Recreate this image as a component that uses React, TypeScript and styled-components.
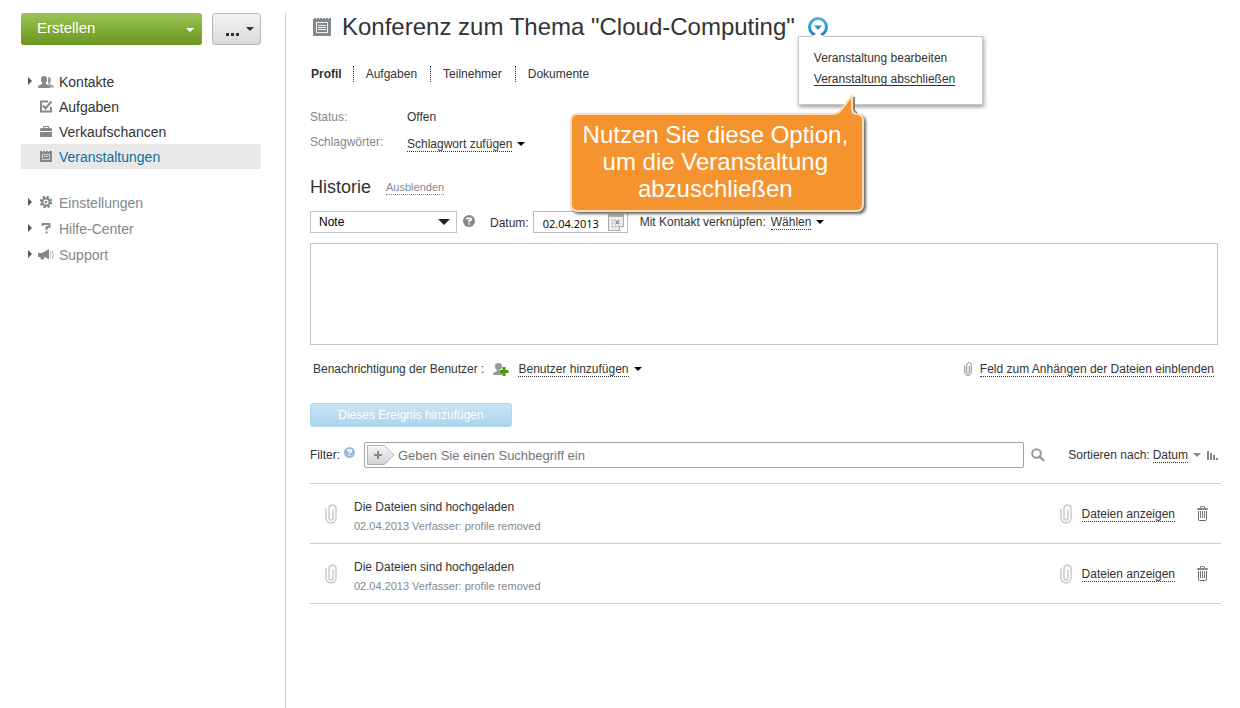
import React from 'react';
import styled, { createGlobalStyle, css } from 'styled-components';

const GlobalStyle = createGlobalStyle`
  *, *::before, *::after { box-sizing: border-box; }
  body {
    margin: 0;
    background: #fff;
    color: #333;
    font-family: "Liberation Sans", Arial, sans-serif;
    font-size: 12px;
    line-height: 16px;
  }
  button, input, select, textarea { font: inherit; color: inherit; }
  button { margin: 0; padding: 0; border: 0; background: none; cursor: pointer; }
  a { color: inherit; text-decoration: none; }
  svg { display: block; flex: none; }
`;

const Page = styled.div`
  display: flex;
  min-height: 100vh;
  padding-top: 13px;
`;

const Sidebar = styled.aside`
  flex: none;
  width: 286px;
  padding: 0 24px 0 21px;
  border-right: 1px solid #ccc;
`;

const Actions = styled.div`
  display: flex;
  gap: 10px;
  height: 32px;
`;

const CreateButton = styled.button`
  flex: 1;
  display: flex;
  align-items: center;
  justify-content: space-between;
  padding: 0 8px 2px 16px;
  border-radius: 3px;
  background: linear-gradient(#9bc453, #6a951f);
  color: #fff;
  font-size: 15px;
  svg { margin-top: 4px; }
`;

const MoreButton = styled.button`
  display: flex;
  align-items: center;
  gap: 7px;
  width: 49px;
  padding: 0 5px 0 13px;
  border: 1px solid #b8b8b8;
  border-radius: 3px;
  background: linear-gradient(#f4f4f4, #d9d9d9);
`;

const NavList = styled.ul`
  margin: 0;
  padding: 0;
  list-style: none;
`;

const MainNav = styled(NavList)`
  margin-top: 24px;
`;

const SideNav = styled(NavList)`
  margin-top: 21px;
`;

const NavItem = styled.li<{ $active?: boolean; $muted?: boolean }>`
  display: flex;
  align-items: center;
  height: ${p => (p.$muted ? 26 : 25)}px;
  font-size: 14px;
  color: ${p => (p.$active ? '#116d9d' : p.$muted ? '#83888d' : '#333')};
  background: ${p => (p.$active ? '#e9e9e9' : 'transparent')};
`;

const NavArrow = styled.span`
  flex: none;
  width: 17px;
  padding: 0 0 2px 7px;
`;

const NavLink = styled.a`
  display: flex;
  align-items: center;
  gap: 5px;
`;

const Main = styled.main`
  flex: 1;
  min-width: 0;
  padding: 0 19px 24px 24px;
`;

const TitleRow = styled.header`
  display: flex;
  align-items: center;
  height: 28px;
  padding-left: 3px;
`;

const Title = styled.h1`
  margin: 0 13px 0 11px;
  font-size: 24px;
  line-height: 28px;
  font-weight: 400;
  white-space: nowrap;
`;

const MenuAnchor = styled.div`
  position: relative;
`;

const MenuToggle = styled.button`
  display: block;
`;

const Menu = styled.div`
  position: absolute;
  z-index: 2;
  top: 19px;
  left: -10px;
  width: 185px;
  height: 69px;
  padding: 11px 15px;
  border: 1px solid #c8c8c8;
  background: #fff;
  box-shadow: 1px 2px 4px rgba(0, 0, 0, 0.4);
  white-space: nowrap;
`;

const MenuLink = styled.a<{ $underlined?: boolean }>`
  display: block;
  line-height: 21px;
  text-decoration: ${p => (p.$underlined ? 'underline' : 'none')};
  text-underline-offset: 2px;
`;

const MenuNotch = styled.svg`
  position: absolute;
  top: -5px;
  left: 13px;
`;

const Callout = styled.div`
  position: absolute;
  z-index: 3;
  top: 96px;
  left: -238px;
  width: 294px;
  padding: 6px 3px 8px 0;
  border: 2px solid #fbdcb9;
  border-radius: 7px;
  background: #f5942e;
  box-shadow: 2px 2px 3px rgba(70, 60, 50, 0.8);
  color: #fff;
  font-size: 24px;
  line-height: 27px;
  text-align: center;
  white-space: nowrap;
`;

const CalloutTip = styled.svg`
  position: absolute;
  top: -21px;
  right: 2px;
`;

const Tabs = styled.nav`
  display: flex;
  margin-top: 25px;
`;

const Tab = styled.a<{ $active?: boolean }>`
  padding: 0 13px 0 12px;
  font-weight: ${p => (p.$active ? 700 : 400)};
  & + & { border-left: 1px dotted #333; }
  &:first-child { padding: 0 11px 0 1px; }
`;

const Details = styled.dl`
  display: grid;
  grid-template-columns: 97px 1fr;
  row-gap: 9px;
  margin: 27px 0 0;
`;

const Term = styled.dt`
  color: #83888d;
`;

const Value = styled.dd`
  display: flex;
  margin: 0;
  button { margin-top: 2px; }
`;

const dotted = css`
  padding-top: 1px;
  border-bottom: 1px dotted #333;
  line-height: 14px;
`;

const DropButton = styled.button`
  display: inline-flex;
  align-items: center;
  gap: 5px;
  white-space: nowrap;
`;

const Dotted = styled.span`
  ${dotted}
`;

const DottedLink = styled.a`
  ${dotted}
`;

const HistoryHead = styled.div`
  display: flex;
  align-items: center;
  gap: 15px;
  height: 20px;
  margin-top: 25px;
`;

const Subtitle = styled.h2`
  margin: 0;
  font-size: 18px;
  line-height: 20px;
  font-weight: 400;
`;

const HideLink = styled.button`
  margin-top: 2px;
  border-bottom: 1px dotted #83888d;
  color: #83888d;
  font-size: 11px;
  line-height: 13px;
`;

const FormRow = styled.div`
  display: flex;
  align-items: center;
  height: 22px;
  margin-top: 14px;
  white-space: nowrap;
`;

const SelectBox = styled.div`
  position: relative;
  width: 147px;
  height: 22px;
  margin-right: 6px;
  svg { position: absolute; right: 7px; top: 8px; pointer-events: none; }
`;

const Select = styled.select`
  appearance: none;
  width: 100%;
  height: 22px;
  padding: 0 24px 0 8px;
  border: 1px solid #c5c5c5;
  border-radius: 0;
  background: #fff;
  color: #000;
`;

const HelpButton = styled.button`
  align-self: flex-start;
  padding-top: 4px;
`;

const DateLabel = styled.label`
  margin: 2px 4px 0 15px;
`;

const DateField = styled.div`
  display: flex;
  align-items: center;
  width: 95px;
  height: 22px;
  margin-right: 12px;
  border: 1px solid #b9bcc0;
`;

const DateInput = styled.input`
  flex: 1;
  min-width: 0;
  height: 20px;
  padding: 2px 0 0 9px;
  border: 0;
  background: none;
  color: #000;
  font-family: "Open Sans", Tahoma, sans-serif;
  font-size: 11px;
`;

const CalendarButton = styled.button`
  padding-right: 3px;
`;

const LinkedLabel = styled.span`
  margin-right: 5px;
`;

const Note = styled.textarea`
  display: block;
  width: calc(100% - 3px);
  height: 102px;
  margin-top: 10px;
  padding: 8px;
  border: 1px solid #c5c5c5;
  border-radius: 0;
  resize: none;
`;

const NotifyRow = styled.div`
  display: flex;
  align-items: center;
  justify-content: space-between;
  height: 16px;
  margin: 16px 7px 0 3px;
  white-space: nowrap;
`;

const Inline = styled.div<{ $gap: number }>`
  display: flex;
  align-items: center;
  gap: ${p => p.$gap}px;
`;

const SubmitButton = styled.button`
  display: block;
  width: 202px;
  height: 24px;
  margin-top: 26px;
  border: 1px solid #add6ea;
  border-radius: 3px;
  background: linear-gradient(#c9e5f4, #acd4ea);
  color: #fff;
`;

const FilterRow = styled.div`
  display: flex;
  align-items: center;
  height: 26px;
  margin-top: 15px;
  white-space: nowrap;
`;

const FilterHelp = styled.button`
  align-self: flex-start;
  padding: 5px 9px 0 4px;
`;

const SearchBox = styled.div`
  flex: 1;
  display: flex;
  align-items: center;
  gap: 3px;
  height: 26px;
  padding-left: 2px;
  border: 1px solid #a2a2a2;
  border-radius: 2px;
`;

const SearchInput = styled.input`
  flex: 1;
  min-width: 0;
  height: 24px;
  padding: 0;
  border: 0;
  background: none;
  font-size: 13px;
  &::placeholder { color: #757575; opacity: 1; }
`;

const SearchButton = styled.button`
  margin: 0 23px 0 7px;
`;

const SortLabel = styled.span`
  margin-right: 3px;
`;

const SortOrder = styled.button`
  margin: 0 3px 0 6px;
`;

const Events = styled.ul`
  margin: 15px 0 0;
  padding: 0;
  border-top: 1px solid #ccc;
  list-style: none;
`;

const EventItem = styled.li`
  display: flex;
  align-items: center;
  height: 60px;
  padding: 0 13px 0 15px;
  border-bottom: 1px solid #ccc;
  white-space: nowrap;
`;

const EventText = styled.div`
  flex: 1;
  margin-left: 17px;
  padding-top: 4px;
  line-height: 20px;
`;

const EventMeta = styled.div`
  color: #83888d;
  font-size: 11px;
  line-height: 18px;
`;

const DeleteButton = styled.button`
  margin-left: 22px;
`;

const Triangle = ({ w = 8, h = 4, fill = '#000' }: { w?: number; h?: number; fill?: string }) => (
  <svg width={w} height={h} aria-hidden="true"><path d={`M0 0H${w}L${w / 2} ${h}Z`} fill={fill} /></svg>
);

const RightArrow = () => (
  <svg width="4" height="8" aria-hidden="true"><path d="M0 0L4 4L0 8Z" fill="#555" /></svg>
);

const Glyph = ({ children }: { children: React.ReactNode }) => (
  <svg width="16" height="16" fill="#83888d" aria-hidden="true">{children}</svg>
);

const ContactsIcon = () => (
  <Glyph>
    <path d="M10 3c2 0 3 1 3 3 0 1.500-.5 2.500-1 3 0 1 .5 1.500 2 2 1.500.500 2 1 2 2.500h-4L10 9Z" opacity=".8" />
    <path d="M3 5c0-2 1-3 3-3s3 1 3 3.500c0 1.500-.6 2.500-1.200 3.200 0 1 .5 1.500 2 2.100C11.300 11.400 12 12 12 14H0c0-2 .7-2.600 2.200-3.200 1.500-.6 2-1.100 2-2.100C3.500 8 3 7 3 5Z" />
  </Glyph>
);

const TasksIcon = () => (
  <Glyph>
    <path d="M10 2.500H3v10h10V8" fill="none" stroke="#83888d" strokeWidth="2" />
    <path d="M5 6.500l2.500 3L13.500 2.500" fill="none" stroke="#83888d" strokeWidth="2" />
  </Glyph>
);

const DealsIcon = () => (
  <Glyph>
    <path d="M5.500 4V2.500h5V4" fill="none" stroke="#83888d" />
    <path d="M3 4h10l1 1v2H2V5ZM2 8h12v5H2Z" />
  </Glyph>
);

const EventsIcon = () => (
  <Glyph>
    <path d="M2 2h2v1h1V2h2v1h1V2h2v1h1V2h3v11H2Z" />
    <path d="M4.500 5.500h7v5h-7ZM6 7.500h4" stroke="#e9e9e9" strokeOpacity=".75" fill="none" />
  </Glyph>
);

const SettingsIcon = () => (
  <Glyph>
    <circle cx="8" cy="7" r="5" fill="none" stroke="#83888d" strokeWidth="2.600" strokeDasharray="2.200 1.727" />
    <circle cx="8" cy="7" r="3.600" fill="none" stroke="#83888d" strokeWidth="2" />
    <circle cx="8" cy="7" r="1.300" />
  </Glyph>
);

const QuestionIcon = () => (
  <Glyph>
    <path d="M4.500 5V3h7v3H8.500V9" fill="none" stroke="#83888d" strokeWidth="2" strokeLinejoin="round" />
    <path d="M7.500 10.500h2v2h-2Z" />
  </Glyph>
);

const SupportIcon = () => (
  <Glyph>
    <path d="M0 6h4l7-4v10L6 10v2.500H3L2 10H0Z" />
    <path d="M12.500 4.500q1 3 0 6M14.500 3.500q1.500 4 0 8" fill="none" stroke="#b5b8bb" />
  </Glyph>
);

const TitleIcon = () => (
  <svg width="18" height="18" aria-hidden="true">
    <path d="M0 1h1V0h2v1h1V0h2v1h1V0h2v1h1V0h2v1h1V0h2v1h1V0h2v17q0 1-1 1H1q-1 0-1-1Z" fill="#83888d" />
    <path d="M3.500 4.500h11v10h-11ZM5 7.500h8M5 9.500h8M5 11.500h8" fill="none" stroke="#fff" strokeOpacity=".9" />
  </svg>
);

const CircleMenuIcon = () => (
  <svg width="20" height="20" aria-hidden="true">
    <defs>
      <linearGradient id="ring" x1="0" y1="0" x2="0" y2="1">
        <stop offset="0" stopColor="#4db1dd" /><stop offset="1" stopColor="#1f7fb8" />
      </linearGradient>
    </defs>
    <circle cx="10" cy="10" r="8.500" fill="#fff" stroke="url(#ring)" strokeWidth="3" />
    <path d="M6 8.500h8l-4 4.500Z" fill="#2d8fc4" />
  </svg>
);

const HelpIcon = ({ size, fill }: { size: number; fill: string }) => (
  <svg width={size} height={size} viewBox="0 0 12 12" aria-hidden="true">
    <circle cx="6" cy="6" r="6" fill={fill} />
    <path d="M4 4.700V3.300h4V5.500H6v1.700" fill="none" stroke="#fff" strokeWidth="1.500" strokeLinejoin="round" />
    <path d="M5.200 8.200h1.600v1.500H5.200Z" fill="#fff" />
  </svg>
);

const CalendarIcon = () => (
  <svg width="16" height="17" aria-hidden="true">
    <path d="M.5.500h15V12L11.500 16.500H.5Z" fill="#eee" stroke="#a9a9a9" />
    <path d="M0 0h16v3H0Z" fill="#b4b4b4" />
    <path d="M3 6.500h10M3 9.500h10M3 12.500h8M4.500 5v9M7.500 5v9M10.500 5v9" fill="none" stroke="#ccc" />
    <path d="M8 7h3v3H8Z" fill="#999" />
    <path d="M11.500 16.500V12.500h4" fill="#fff" stroke="#a9a9a9" />
  </svg>
);

const AddUserIcon = () => (
  <svg width="16" height="13" aria-hidden="true">
    <path d="M2 3c0-2 1.500-3 3.500-3S9 1 9 3.500C9 5 8.500 6 7.500 7v1l3 1.500V12H0c0-2 .5-2.500 2-3s2-1 2-2C2.500 6 2 5 2 3Z" fill="#999" />
    <path d="M9.500 3h3v3.500H16v3h-3.500V13h-3V9.500H6v-3h3.500Z" fill="#fff" />
    <path d="M9.500 4h3v3h3v3h-3v3h-3v-3h-3V7h3Z" fill="#4e9a06" />
  </svg>
);

const ClipIcon = ({ large }: { large?: boolean }) => (
  <svg width={large ? 12 : 8} height={large ? 20 : 14} viewBox={large ? '0 0 12 20' : '0 0 8 14'} fill="none" stroke={large ? '#ccc' : '#888'} strokeWidth={large ? 1.6 : 1} aria-hidden="true">
    {large
      ? <path d="M1 4.500V14c0 6.500 10 6.500 10 0V4.500c0-4.500-7-4.500-7 0V14c0 2.600 4 2.600 4 0V5.500" />
      : <path d="M.7 3.500V10c0 4.500 6.600 4.500 6.600 0V3.200c0-3.500-4.600-3.500-4.600 0V10c0 1.800 2.600 1.800 2.600 0V4" />}
  </svg>
);

const TagIcon = () => (
  <svg width="28" height="20" aria-hidden="true">
    <defs>
      <linearGradient id="tag" x1="0" y1="0" x2="0" y2="1">
        <stop offset="0" stopColor="#f6f6f6" /><stop offset="1" stopColor="#d2d2d2" />
      </linearGradient>
    </defs>
    <path d="M.5.500H17.500L27 10L17.500 19.500H.5Z" fill="url(#tag)" stroke="#b5b5b5" />
    <path d="M7 10h8M11 6v8" stroke="#888" strokeWidth="2" />
  </svg>
);

const SearchIcon = () => (
  <svg width="14" height="14" fill="none" stroke="#999" aria-hidden="true">
    <circle cx="5.500" cy="5.500" r="4.300" strokeWidth="2" />
    <path d="M8.700 8.700L13 13" strokeWidth="2.400" />
  </svg>
);

const BarsIcon = () => (
  <svg width="11" height="9" fill="#888" aria-hidden="true">
    <path d="M0 0h2v9H0ZM3 2h2v7H3ZM6 4h2v5H6ZM9 7h2v2H9Z" />
  </svg>
);

const TrashIcon = () => (
  <svg width="11" height="15" fill="none" stroke="#666" aria-hidden="true">
    <path d="M3.500 2V.5h4V2" stroke="#888" />
    <path d="M.5 2.500h10v1H.5Z" stroke="#888" />
    <path d="M1.500 5v8.500q0 1 1 1h6q1 0 1-1V5" />
    <path d="M3.500 5v7M5.500 5v7M7.500 5v7" stroke="#777" />
  </svg>
);

const mainItems = [
  { label: 'Kontakte', icon: <ContactsIcon />, arrow: true },
  { label: 'Aufgaben', icon: <TasksIcon /> },
  { label: 'Verkaufschancen', icon: <DealsIcon /> },
  { label: 'Veranstaltungen', icon: <EventsIcon />, active: true },
];

const sideItems = [
  { label: 'Einstellungen', icon: <SettingsIcon /> },
  { label: 'Hilfe-Center', icon: <QuestionIcon /> },
  { label: 'Support', icon: <SupportIcon /> },
];

const events = [1, 2];

export default function App() {
  return (
    <>
      <GlobalStyle />
      <Page>
        <Sidebar>
          <Actions>
            <CreateButton type="button">Erstellen<Triangle fill="#fff" /></CreateButton>
            <MoreButton type="button" aria-label="Mehr">
              <svg width="13" height="16" fill="#333"><path d="M0 12h3v3H0ZM5 12h3v3H5ZM10 12h3v3h-3Z" /></svg>
              <Triangle fill="#333" />
            </MoreButton>
          </Actions>
          <MainNav>
            {mainItems.map(i => (
              <NavItem key={i.label} $active={i.active}>
                <NavArrow>{i.arrow && <RightArrow />}</NavArrow>
                <NavLink href="#">{i.icon}{i.label}</NavLink>
              </NavItem>
            ))}
          </MainNav>
          <SideNav>
            {sideItems.map(i => (
              <NavItem key={i.label} $muted>
                <NavArrow><RightArrow /></NavArrow>
                <NavLink href="#">{i.icon}{i.label}</NavLink>
              </NavItem>
            ))}
          </SideNav>
        </Sidebar>
        <Main>
          <TitleRow>
            <TitleIcon />
            <Title>Konferenz zum Thema "Cloud-Computing"</Title>
            <MenuAnchor>
              <MenuToggle type="button" aria-label="Aktionen"><CircleMenuIcon /></MenuToggle>
              <Menu>
                <MenuNotch width="12" height="5"><path d="M0 5L6 0L12 5Z" fill="#fff" /></MenuNotch>
                <MenuLink href="#">Veranstaltung bearbeiten</MenuLink>
                <MenuLink href="#" $underlined>Veranstaltung abschließen</MenuLink>
              </Menu>
              <Callout>
                <CalloutTip width="28" height="22">
                  <path d="M22 3V15Q22 18 25 19" fill="none" stroke="#8f8378" strokeWidth="2" />
                  <path d="M3 22V20Q6 19 8 17L20 2V15Q20 19 24 20V22Z" fill="#f5942e" />
                  <path d="M2 20Q5 20 8 17L20 2V15Q20 19 24 20" fill="none" stroke="#fbdcb9" strokeWidth="2" />
                </CalloutTip>
                Nutzen Sie diese Option,<br />um die Veranstaltung<br />abzuschließen
              </Callout>
            </MenuAnchor>
          </TitleRow>
          <Tabs>
            <Tab href="#" $active>Profil</Tab>
            <Tab href="#">Aufgaben</Tab>
            <Tab href="#">Teilnehmer</Tab>
            <Tab href="#">Dokumente</Tab>
          </Tabs>
          <Details>
            <Term>Status:</Term>
            <Value>Offen</Value>
            <Term>Schlagwörter:</Term>
            <Value><DropButton type="button"><Dotted>Schlagwort zufügen</Dotted><Triangle /></DropButton></Value>
          </Details>
          <HistoryHead>
            <Subtitle>Historie</Subtitle>
            <HideLink type="button">Ausblenden</HideLink>
          </HistoryHead>
          <FormRow>
            <SelectBox>
              <Select aria-label="Art des Ereignisses" defaultValue="Note"><option>Note</option></Select>
              <Triangle w={12} h={6} fill="#222" />
            </SelectBox>
            <HelpButton type="button" aria-label="Hilfe"><HelpIcon size={12} fill="#83888d" /></HelpButton>
            <DateLabel htmlFor="date">Datum:</DateLabel>
            <DateField>
              <DateInput id="date" defaultValue="02.04.2013" />
              <CalendarButton type="button" aria-label="Kalender"><CalendarIcon /></CalendarButton>
            </DateField>
            <LinkedLabel>Mit Kontakt verknüpfen:</LinkedLabel>
            <DropButton type="button"><Dotted>Wählen</Dotted><Triangle /></DropButton>
          </FormRow>
          <Note aria-label="Notiz" />
          <NotifyRow>
            <Inline $gap={9}>
              <span>Benachrichtigung der Benutzer :</span>
              <AddUserIcon />
              <DropButton type="button"><Dotted>Benutzer hinzufügen</Dotted><Triangle /></DropButton>
            </Inline>
            <Inline $gap={8}>
              <ClipIcon />
              <DottedLink href="#">Feld zum Anhängen der Dateien einblenden</DottedLink>
            </Inline>
          </NotifyRow>
          <SubmitButton type="button">Dieses Ereignis hinzufügen</SubmitButton>
          <FilterRow>
            <label htmlFor="filter">Filter:</label>
            <FilterHelp type="button" aria-label="Filterhilfe"><HelpIcon size={11} fill="#9fb9dc" /></FilterHelp>
            <SearchBox>
              <button type="button" aria-label="Filter hinzufügen"><TagIcon /></button>
              <SearchInput id="filter" placeholder="Geben Sie einen Suchbegriff ein" />
            </SearchBox>
            <SearchButton type="button" aria-label="Suchen"><SearchIcon /></SearchButton>
            <SortLabel>Sortieren nach:</SortLabel>
            <DropButton type="button"><Dotted>Datum</Dotted><Triangle fill="#888" /></DropButton>
            <SortOrder type="button" aria-label="Reihenfolge"><BarsIcon /></SortOrder>
          </FilterRow>
          <Events>
            {events.map(id => (
              <EventItem key={id}>
                <ClipIcon large />
                <EventText>
                  Die Dateien sind hochgeladen
                  <EventMeta>02.04.2013 Verfasser: profile removed</EventMeta>
                </EventText>
                <Inline $gap={10}>
                  <ClipIcon large />
                  <DottedLink href="#">Dateien anzeigen</DottedLink>
                </Inline>
                <DeleteButton type="button" aria-label="Löschen"><TrashIcon /></DeleteButton>
              </EventItem>
            ))}
          </Events>
        </Main>
      </Page>
    </>
  );
}
